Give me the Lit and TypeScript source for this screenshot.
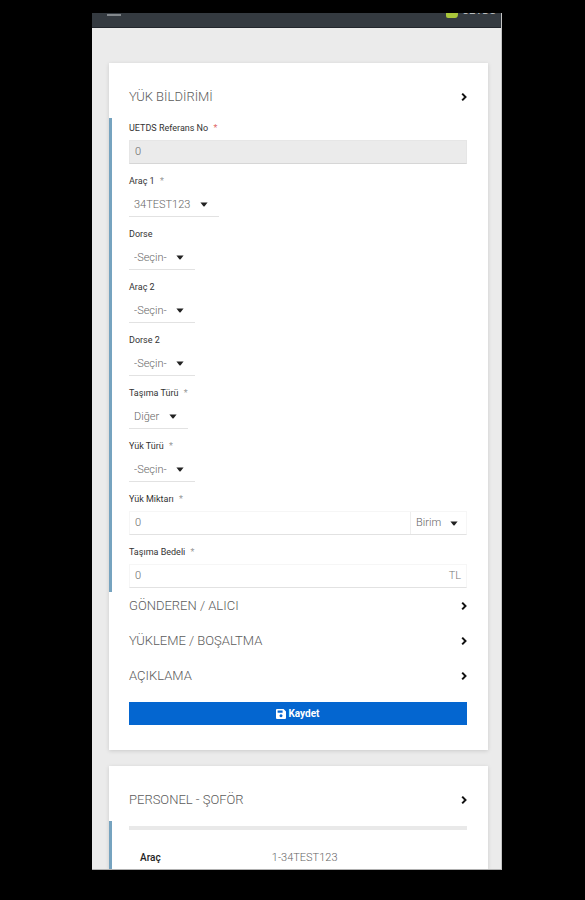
import { LitElement, html, css, svg } from "lit";
import { customElement, property } from "lit/decorators.js";

const caret = html`<svg class="caret" viewBox="0 0 8 5" aria-hidden="true">
  ${svg`<path d="M0.4 0.5h7.2L4.6 4.2q-.6.6-1.2 0z" fill="currentColor" />`}
</svg>`;

@customElement("section-heading")
export class SectionHeading extends LitElement {
  @property() label = "";

  static styles = css`
    :host {
      display: block;
    }
    .title {
      margin: 0;
      font: inherit;
    }
    .toggle {
      display: flex;
      align-items: center;
      justify-content: space-between;
      width: 100%;
      height: 28px;
      padding: 0;
      border: 0;
      background: none;
      color: #5c5c5c;
      font: 300 13px/16px Roboto, "Liberation Sans", sans-serif;
      text-align: left;
    }
    .chevron {
      width: 6px;
      height: 10px;
      color: #111;
    }
  `;

  render() {
    return html`<h2 class="title">
      <button class="toggle" type="button">
        <span>${this.label}</span>
        <svg class="chevron" viewBox="0 0 6 10" aria-hidden="true">
          <path d="M1.2 1.6 4.5 5 1.2 8.4" fill="none" stroke="currentColor" stroke-width="2" />
        </svg>
      </button>
    </h2>`;
  }
}

interface SelectField {
  id: string;
  label: string;
  value: string;
  required?: boolean;
}

const selects: SelectField[] = [
  { id: "arac1", label: "Araç 1", value: "34TEST123", required: true },
  { id: "dorse", label: "Dorse", value: "-Seçin-" },
  { id: "arac2", label: "Araç 2", value: "-Seçin-" },
  { id: "dorse2", label: "Dorse 2", value: "-Seçin-" },
  { id: "tasima", label: "Taşıma Türü", value: "Diğer", required: true },
  { id: "yuk", label: "Yük Türü", value: "-Seçin-", required: true },
];

@customElement("app-root")
export class AppRoot extends LitElement {
  static styles = css`
    :host {
      display: block;
      box-sizing: border-box;
      min-height: 100vh;
      padding: 13px 83px 30px 92px;
      background: #000;
      color: #666;
      font: 300 11px/16px Roboto, "Liberation Sans", sans-serif;
    }
    * {
      box-sizing: border-box;
    }
    .screen {
      overflow: hidden;
      background: #ebebeb;
      border-right: 1px solid #c4c4c4;
      border-bottom: 1px solid #b0b0b0;
    }
    .topbar {
      display: flex;
      align-items: flex-end;
      justify-content: space-between;
      height: 15px;
      padding: 0 5px 8px 15px;
      overflow: hidden;
      background: #343a40;
      border-bottom: 1px solid #22262c;
    }
    .menu {
      flex: none;
      width: 14px;
      height: 12px;
      margin-bottom: 3px;
      color: #83888c;
    }
    .brand {
      display: flex;
      align-items: center;
      gap: 4px;
      height: 16px;
      color: #b9bcbe;
      font-weight: 500;
      line-height: 16px;
      text-decoration: none;
    }
    .logo {
      flex: none;
      width: 12px;
      height: 16px;
    }
    .content {
      display: grid;
      gap: 16px;
      padding: 35px 13px 0 17px;
    }
    .card {
      padding: 20px 21px 25px 20px;
      background: #fff;
      box-shadow: 0 1px 4px rgba(0, 0, 0, 0.14);
    }
    .last {
      padding-bottom: 0;
    }
    .section {
      display: grid;
      gap: 9px;
      margin: 7px 0 0 -20px;
      padding: 2px 0 4px 17px;
      border-left: 3px solid #76a3bf;
    }
    section-heading + section-heading {
      margin-top: 7px;
    }
    .field {
      display: grid;
      gap: 4px;
      justify-items: start;
    }
    .label {
      color: #333;
      font-size: 9px;
      font-weight: 400;
      line-height: 16px;
    }
    .star {
      margin-left: 3px;
      color: #999;
    }
    .red {
      color: #e06a6a;
    }
    .group {
      display: flex;
      align-items: center;
      width: 100%;
      height: 24px;
      border: 1px solid #f6f6f6;
      border-bottom-color: #e2e2e2;
    }
    .input,
    .select {
      border: 0;
      border-radius: 0;
      background: transparent;
      color: #666;
      font: inherit;
    }
    .input {
      flex: 1;
      min-width: 0;
      height: 100%;
      padding: 0 5px 2px;
    }
    .disabled {
      background: #ebebeb;
      border-color: #e6e6e6;
      border-bottom-color: #d6d6d6;
    }
    .unit {
      padding-right: 5px;
      color: #777;
    }
    .picker {
      display: flex;
      position: relative;
      height: 24px;
      border-bottom: 1px solid #e2e2e2;
    }
    .inner {
      height: 100%;
      border-bottom: 0;
      border-left: 1px solid #eee;
    }
    .select {
      appearance: none;
      height: 100%;
      padding: 0 28px 0 5px;
    }
    .inner .select {
      padding-right: 24px;
    }
    .caret {
      position: absolute;
      top: 9px;
      right: 11px;
      width: 8px;
      height: 5px;
      color: #222;
      pointer-events: none;
    }
    .inner .caret {
      right: 8px;
    }
    .save {
      display: flex;
      align-items: center;
      justify-content: center;
      gap: 2px;
      width: 100%;
      height: 23px;
      margin-top: 12px;
      padding: 0;
      border: 0;
      background: #0466d0;
      color: #fff;
      font: 700 10px/16px Roboto, "Liberation Sans", sans-serif;
    }
    .disk {
      width: 10px;
      height: 10px;
    }
    .people {
      padding: 5px 0 0 17px;
    }
    .table {
      width: 100%;
      border-collapse: collapse;
      border-top: 4px solid #e9e9e9;
    }
    .key,
    .value {
      padding: 20px 0 3px 11px;
      text-align: left;
    }
    .key {
      width: 39%;
      color: #222;
      font-weight: 500;
      font-size: 10px;
    }
    .value {
      color: #666;
    }
  `;

  private label(id: string, text: string, required = false, red = false) {
    return html`<label class="label" for=${id}
      >${text}
      ${required ? html`<span class=${red ? "star red" : "star"}>*</span>` : ""}</label
    >`;
  }

  private picker(id: string, value: string, inner = false) {
    return html`<div class=${inner ? "picker inner" : "picker"}>
      <select class="select" id=${id} aria-label=${value}>
        <option>${value}</option>
      </select>
      ${caret}
    </div>`;
  }

  render() {
    return html`<div class="screen">
      <header class="topbar">
        <svg class="menu" viewBox="0 0 14 12" aria-hidden="true">
          <path d="M0 1h14M0 6h14M0 11h14" stroke="currentColor" stroke-width="2" />
        </svg>
        <a class="brand" href="#">
          <svg class="logo" viewBox="0 0 12 16" aria-hidden="true">
            <path d="M2 0h8q2 0 2 2v9q0 4-3 4H2q-2 0-2-2V2q0-2 2-2z" fill="#a9c63a" />
          </svg>
          UETDS
        </a>
      </header>
      <main class="content">
        <form class="card" @submit=${(e: Event) => e.preventDefault()}>
          <section-heading label="YÜK BİLDİRİMİ"></section-heading>
          <div class="section">
            <div class="field">
              ${this.label("ref", "UETDS Referans No", true, true)}
              <div class="group disabled">
                <input class="input" id="ref" value="0" readonly />
              </div>
            </div>
            ${selects.map(
              (s) => html`<div class="field">
                ${this.label(s.id, s.label, s.required)} ${this.picker(s.id, s.value)}
              </div>`
            )}
            <div class="field">
              ${this.label("miktar", "Yük Miktarı", true)}
              <div class="group">
                <input class="input" id="miktar" value="0" />
                ${this.picker("birim", "Birim", true)}
              </div>
            </div>
            <div class="field">
              ${this.label("bedel", "Taşıma Bedeli", true)}
              <div class="group">
                <input class="input" id="bedel" value="0" />
                <span class="unit">TL</span>
              </div>
            </div>
          </div>
          <section-heading label="GÖNDEREN / ALICI"></section-heading>
          <section-heading label="YÜKLEME / BOŞALTMA"></section-heading>
          <section-heading label="AÇIKLAMA"></section-heading>
          <button class="save" type="submit">
            <svg class="disk" viewBox="0 0 10 10" aria-hidden="true">
              <path
                d="M1 0h6.6L10 2.4V9q0 1-1 1H1Q0 10 0 9V1q0-1 1-1zM1.6 1.6v2.2h5V1.6zM5 5.2a1.5 1.5 0 1 0 .01 0z"
                fill="currentColor"
                fill-rule="evenodd"
              />
            </svg>
            Kaydet
          </button>
        </form>
        <section class="card last">
          <section-heading label="PERSONEL - ŞOFÖR"></section-heading>
          <div class="section people">
            <table class="table">
              <tr>
                <th class="key" scope="row">Araç</th>
                <td class="value">1-34TEST123</td>
              </tr>
            </table>
          </div>
        </section>
      </main>
    </div>`;
  }
}
